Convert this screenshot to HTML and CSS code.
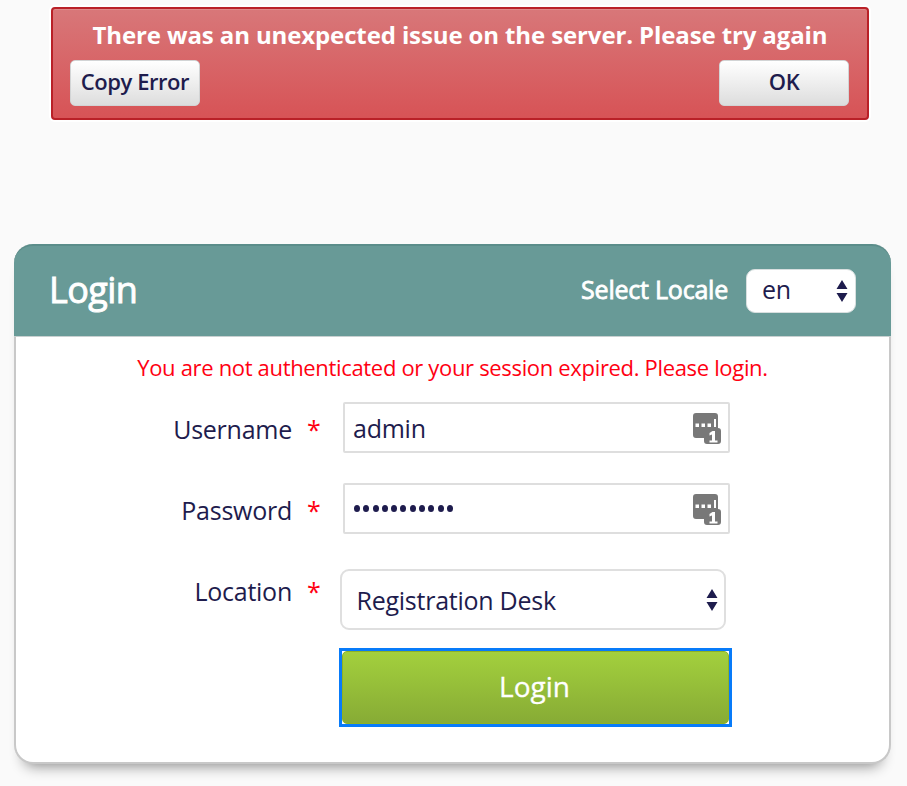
FILE: index.html
```html
<!DOCTYPE html>
<html lang="en">
<head>
<meta charset="utf-8">
<title>Login</title>
<link rel="stylesheet" href="styles.css">
</head>
<body>
<svg class="defs" width="0" height="0" aria-hidden="true">
  <symbol id="arrows" viewBox="0 0 12 22"><path d="M6 0 11.500 9H.5zM6 22 .5 13h11z"/></symbol>
  <symbol id="manager" viewBox="0 0 29 32">
    <path fill="#787878" d="M3 0h19q3 0 3 3v12q3 0 3 3v10q0 3-3 3H14q-3 0-3-3v-3H3q-3 0-3-3V3q0-3 3-3z"/>
    <path fill="#fff" d="M2.500 10.500H6V14H2.500zM8.500 10.500H12V14H8.500zM14.500 10.500H18V14h-3.500zM21 6h2v8h-2z"/>
    <path fill="#fff" d="M19.500 18H22v9.500h2.500V29.500h-8V27.500H19v-6l-2.500 1v-2.500z"/>
  </symbol>
</svg>
<section class="alert" role="alert">
  <p class="alert-text">There was an unexpected issue on the server. Please try again</p>
  <div class="alert-actions">
    <button class="small-button copy">Copy Error</button>
    <button class="small-button ok">OK</button>
  </div>
</section>
<main class="card">
  <header class="card-header">
    <h1 class="title">Login</h1>
    <div class="locale">
      <span class="locale-label">Select Locale</span>
      <div class="select locale-select"><span>en</span><svg class="arrows"><use href="#arrows"/></svg></div>
    </div>
  </header>
  <p class="error">You are not authenticated or your session expired. Please login.</p>
  <form class="form">
    <div class="row">
      <label class="label username">Username</label><span class="star">*</span>
      <div class="input"><span class="value">admin</span><svg class="manager"><use href="#manager"/></svg></div>
    </div>
    <div class="row">
      <label class="label password">Password</label><span class="star">*</span>
      <div class="input"><span class="dots"><i></i><i></i><i></i><i></i><i></i><i></i><i></i><i></i><i></i><i></i><i></i></span><svg class="manager"><use href="#manager"/></svg></div>
    </div>
    <div class="row location-row">
      <label class="label location">Location</label><span class="star">*</span>
      <div class="select location-select"><span>Registration Desk</span><svg class="arrows"><use href="#arrows"/></svg></div>
    </div>
    <div class="submit"><button type="button" class="login"><span>Login</span></button></div>
  </form>
</main>
</body>
</html>
```
FILE: styles.css
```css
* { box-sizing: border-box; }
body { margin: 0; height: 786px; overflow: hidden; padding-top: 7px; background: #fafafa; color: #1e1c4d; font-family: "Open Sans", sans-serif; }
.defs { display: block; }
h1, p { margin: 0; }
button { font: inherit; color: inherit; }
.alert { width: 818px; height: 113px; margin-left: 51px; padding: 10px 18px 0; border: 2px solid #b92027; border-radius: 4px; background: linear-gradient(#d87779, #d75356); box-shadow: inset 0 1px #df8a8b, 0 0 0 2px #fff; }
.alert-text { color: #fff; font-size: 24px; font-weight: 700; line-height: 32px; letter-spacing: -.12px; text-align: center; white-space: nowrap; }
.alert-actions { display: flex; justify-content: space-between; margin: 9px 0 0 -1px; }
.small-button { width: 130px; height: 46px; padding: 0 0 4px; border: 1px solid #d2d4d5; border-radius: 5px; background: linear-gradient(#fff, #ddd); font-size: 22px; font-weight: 600; letter-spacing: -.45px; white-space: nowrap; }
.card { width: 877px; height: 520px; margin: 124px 0 0 14px; border: 2px solid #c8c8c8; border-top: 0; border-radius: 19px; background: #fff; box-shadow: 0 12px 14px -10px #888; }
.card-header { display: flex; align-items: center; justify-content: space-between; height: 92px; margin: 0 -2px; padding: 0 35px 2px; border-top: 2px solid #5b8d8a; border-radius: 19px 19px 0 0; background: #689a97; color: #fff; box-shadow: 0 1px #c8d0d0; }
.title { font-size: 36px; font-weight: 400; line-height: 48px; letter-spacing: -.6px; -webkit-text-stroke: .9px #fff; }
.locale { display: flex; align-items: center; gap: 18px; }
.locale-label { margin-bottom: 2px; font-size: 25px; letter-spacing: -.22px; -webkit-text-stroke: .8px #fff; }
.select { display: flex; align-items: center; justify-content: space-between; background: #fff; color: #1e1c4d; font-size: 25px; letter-spacing: -.25px; }
.locale-select { width: 110px; height: 44px; margin-top: 2px; padding: 0 7px 4px 15px; border: 1px solid #d8dfdf; border-radius: 9px; }
.arrows { display: block; width: 12px; height: 22px; fill: #1e1c4d; }
.locale-select .arrows { margin-top: 4px; }
.error { margin-top: 15px; color: #ff0012; font-size: 22px; line-height: 32px; letter-spacing: -.33px; text-align: center; white-space: nowrap; }
.form { margin-top: 19px; }
.row { display: grid; grid-template-columns: 276px 29px 1fr; height: 81px; }
.label { font-size: 25px; line-height: 34px; letter-spacing: -.25px; text-align: right; margin-top: 10px; }
.star { color: #ff0012; font-size: 25px; line-height: 34px; padding-left: 15px; margin-top: 10px; }
.input { display: flex; align-items: center; justify-content: space-between; width: 387px; height: 51px; margin-left: 22px; padding: 0 6px 0 8px; border: 2px solid #dedede; border-radius: 2px; font-size: 25px; letter-spacing: -.25px; }
.manager { width: 29px; height: 32px; margin-top: 2px; }
.dots { display: flex; gap: 3.3px; margin-left: 1px; }
.dots i { width: 6px; height: 7px; border-radius: 50%; background: #1e1c4d; }
.location-select { width: 386px; height: 61px; margin: 5px 0 0 19px; padding: 0 6px 0 14.500px; border: 2px solid #dfdfdf; border-radius: 9px; }
.location-row { height: 84px; }
.submit { padding-left: 323px; }
.login { display: block; width: 393px; height: 79px; padding: 0; border: 3px solid #087bf9; background: #fff; }
.login span { display: flex; align-items: center; justify-content: center; height: 73px; padding: 0 2px 4px 0; border: 1px solid #8eb223; border-radius: 5px; background: linear-gradient(#a3d03d, #87ab35); color: #fff; font-size: 28px; -webkit-text-stroke: .3px #fff; }
```
